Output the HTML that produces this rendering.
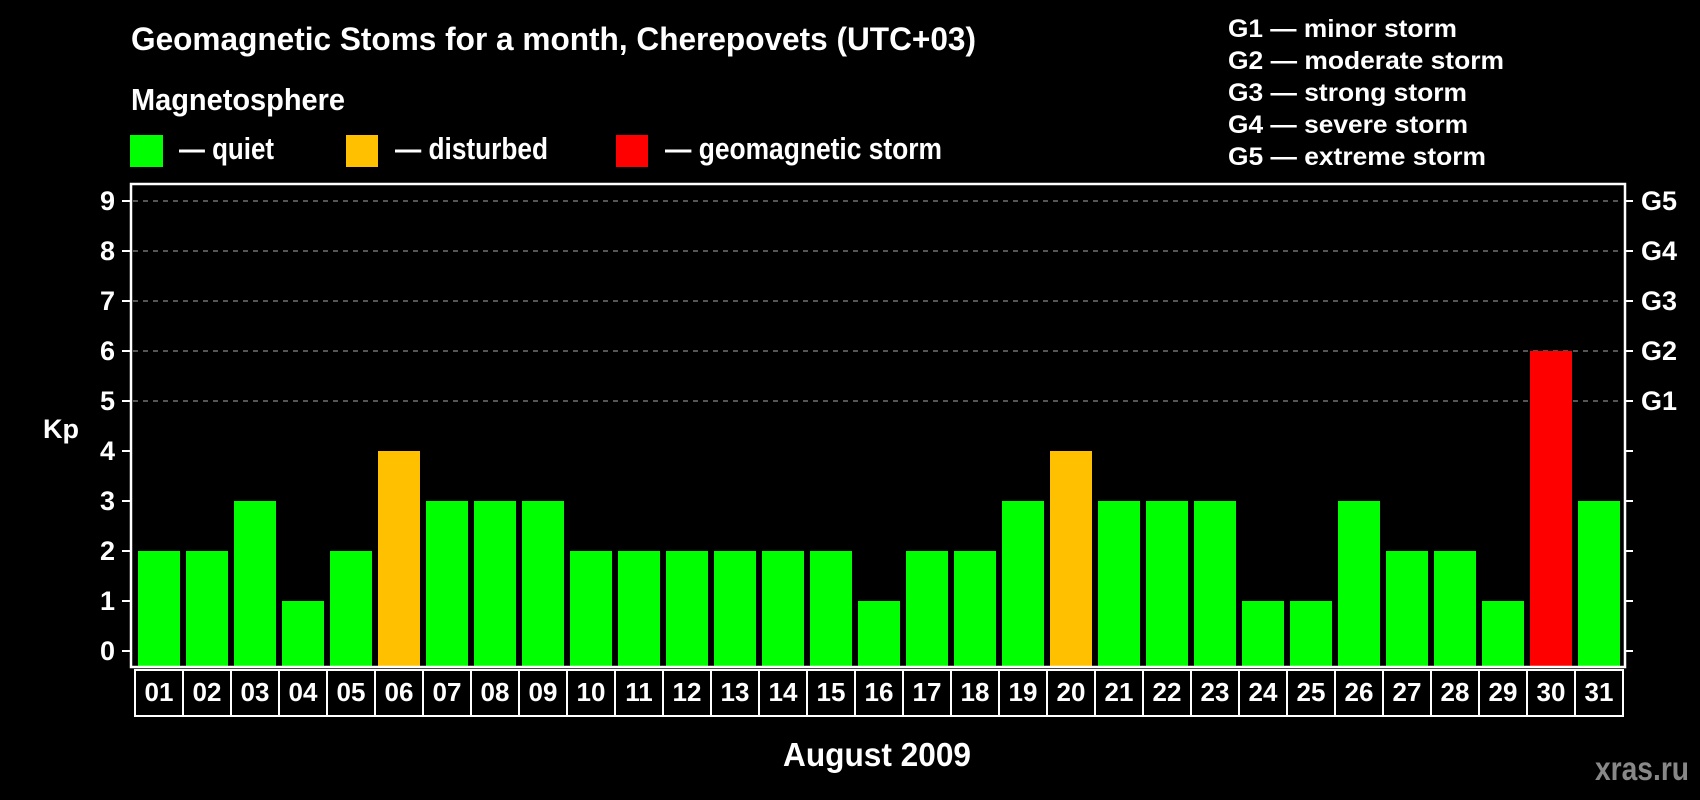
<!DOCTYPE html>
<html><head><meta charset="utf-8"><style>
html,body{margin:0;padding:0;background:#000;width:1700px;height:800px;overflow:hidden}
svg{display:block}
text{font-family:"Liberation Sans",Arial,sans-serif;font-weight:bold;fill:#fff}
</style></head><body>
<svg width="1700" height="800" viewBox="0 0 1700 800" xmlns="http://www.w3.org/2000/svg">
<rect width="1700" height="800" fill="#000"/>
<text x="131" y="50" font-size="32" textLength="845" lengthAdjust="spacingAndGlyphs">Geomagnetic Stoms for a month, Cherepovets (UTC+03)</text>
<text x="131" y="110" font-size="31" textLength="214" lengthAdjust="spacingAndGlyphs">Magnetosphere</text>
<rect x="130" y="135" width="33" height="32" fill="#00ff00"/>
<text x="179" y="159" font-size="31" textLength="95" lengthAdjust="spacingAndGlyphs">— quiet</text>
<rect x="346" y="135" width="32" height="32" fill="#ffc000"/>
<text x="395" y="159" font-size="31" textLength="153" lengthAdjust="spacingAndGlyphs">— disturbed</text>
<rect x="616" y="135" width="32" height="32" fill="#ff0000"/>
<text x="665" y="159" font-size="31" textLength="277" lengthAdjust="spacingAndGlyphs">— geomagnetic storm</text>

<text x="1228" y="37" font-size="25" textLength="229" lengthAdjust="spacingAndGlyphs">G1 — minor storm</text>
<text x="1228" y="69" font-size="25" textLength="276" lengthAdjust="spacingAndGlyphs">G2 — moderate storm</text>
<text x="1228" y="101" font-size="25" textLength="239" lengthAdjust="spacingAndGlyphs">G3 — strong storm</text>
<text x="1228" y="133" font-size="25" textLength="240" lengthAdjust="spacingAndGlyphs">G4 — severe storm</text>
<text x="1228" y="165" font-size="25" textLength="258" lengthAdjust="spacingAndGlyphs">G5 — extreme storm</text>

<g stroke="#aaa" stroke-width="1" stroke-dasharray="5,5">
<line x1="133" y1="201" x2="1623" y2="201"/>
<line x1="133" y1="251" x2="1623" y2="251"/>
<line x1="133" y1="301" x2="1623" y2="301"/>
<line x1="133" y1="351" x2="1623" y2="351"/>
<line x1="133" y1="401" x2="1623" y2="401"/>
</g>

<g>
<rect x="138" y="551" width="42" height="116" fill="#00ff00"/>
<rect x="186" y="551" width="42" height="116" fill="#00ff00"/>
<rect x="234" y="501" width="42" height="166" fill="#00ff00"/>
<rect x="282" y="601" width="42" height="66" fill="#00ff00"/>
<rect x="330" y="551" width="42" height="116" fill="#00ff00"/>
<rect x="378" y="451" width="42" height="216" fill="#ffc000"/>
<rect x="426" y="501" width="42" height="166" fill="#00ff00"/>
<rect x="474" y="501" width="42" height="166" fill="#00ff00"/>
<rect x="522" y="501" width="42" height="166" fill="#00ff00"/>
<rect x="570" y="551" width="42" height="116" fill="#00ff00"/>
<rect x="618" y="551" width="42" height="116" fill="#00ff00"/>
<rect x="666" y="551" width="42" height="116" fill="#00ff00"/>
<rect x="714" y="551" width="42" height="116" fill="#00ff00"/>
<rect x="762" y="551" width="42" height="116" fill="#00ff00"/>
<rect x="810" y="551" width="42" height="116" fill="#00ff00"/>
<rect x="858" y="601" width="42" height="66" fill="#00ff00"/>
<rect x="906" y="551" width="42" height="116" fill="#00ff00"/>
<rect x="954" y="551" width="42" height="116" fill="#00ff00"/>
<rect x="1002" y="501" width="42" height="166" fill="#00ff00"/>
<rect x="1050" y="451" width="42" height="216" fill="#ffc000"/>
<rect x="1098" y="501" width="42" height="166" fill="#00ff00"/>
<rect x="1146" y="501" width="42" height="166" fill="#00ff00"/>
<rect x="1194" y="501" width="42" height="166" fill="#00ff00"/>
<rect x="1242" y="601" width="42" height="66" fill="#00ff00"/>
<rect x="1290" y="601" width="42" height="66" fill="#00ff00"/>
<rect x="1338" y="501" width="42" height="166" fill="#00ff00"/>
<rect x="1386" y="551" width="42" height="116" fill="#00ff00"/>
<rect x="1434" y="551" width="42" height="116" fill="#00ff00"/>
<rect x="1482" y="601" width="42" height="66" fill="#00ff00"/>
<rect x="1530" y="351" width="42" height="316" fill="#ff0000"/>
<rect x="1578" y="501" width="42" height="166" fill="#00ff00"/>
</g>

<rect x="131" y="184" width="1494" height="483" fill="none" stroke="#fff" stroke-width="2.5"/>

<g stroke="#fff" stroke-width="2">
<line x1="122" y1="201" x2="131" y2="201"/><line x1="122" y1="251" x2="131" y2="251"/>
<line x1="122" y1="301" x2="131" y2="301"/><line x1="122" y1="351" x2="131" y2="351"/>
<line x1="122" y1="401" x2="131" y2="401"/><line x1="122" y1="451" x2="131" y2="451"/>
<line x1="122" y1="501" x2="131" y2="501"/><line x1="122" y1="551" x2="131" y2="551"/>
<line x1="122" y1="601" x2="131" y2="601"/><line x1="122" y1="651" x2="131" y2="651"/>
<line x1="1625" y1="201" x2="1633" y2="201"/><line x1="1625" y1="251" x2="1633" y2="251"/>
<line x1="1625" y1="301" x2="1633" y2="301"/><line x1="1625" y1="351" x2="1633" y2="351"/>
<line x1="1625" y1="401" x2="1633" y2="401"/><line x1="1625" y1="451" x2="1633" y2="451"/>
<line x1="1625" y1="501" x2="1633" y2="501"/><line x1="1625" y1="551" x2="1633" y2="551"/>
<line x1="1625" y1="601" x2="1633" y2="601"/><line x1="1625" y1="651" x2="1633" y2="651"/>
</g>

<g font-size="27" text-anchor="end">
<text x="115" y="210">9</text><text x="115" y="260">8</text><text x="115" y="310">7</text>
<text x="115" y="360">6</text><text x="115" y="410">5</text><text x="115" y="460">4</text>
<text x="115" y="510">3</text><text x="115" y="560">2</text><text x="115" y="610">1</text>
<text x="115" y="660">0</text>
</g>
<text x="43" y="438" font-size="27">Kp</text>
<g font-size="27">
<text x="1641" y="210">G5</text><text x="1641" y="260">G4</text><text x="1641" y="310">G3</text>
<text x="1641" y="360">G2</text><text x="1641" y="410">G1</text>
</g>

<g fill="none" stroke="#fff" stroke-width="2">
<rect x="135" y="670" width="1488" height="46"/>
<path d="M183 670V716M231 670V716M279 670V716M327 670V716M375 670V716M423 670V716M471 670V716M519 670V716M567 670V716M615 670V716M663 670V716M711 670V716M759 670V716M807 670V716M855 670V716M903 670V716M951 670V716M999 670V716M1047 670V716M1095 670V716M1143 670V716M1191 670V716M1239 670V716M1287 670V716M1335 670V716M1383 670V716M1431 670V716M1479 670V716M1527 670V716M1575 670V716"/>
</g>
<g font-size="26" text-anchor="middle">
<text x="159" y="701">01</text><text x="207" y="701">02</text><text x="255" y="701">03</text><text x="303" y="701">04</text>
<text x="351" y="701">05</text><text x="399" y="701">06</text><text x="447" y="701">07</text><text x="495" y="701">08</text>
<text x="543" y="701">09</text><text x="591" y="701">10</text><text x="639" y="701">11</text><text x="687" y="701">12</text>
<text x="735" y="701">13</text><text x="783" y="701">14</text><text x="831" y="701">15</text><text x="879" y="701">16</text>
<text x="927" y="701">17</text><text x="975" y="701">18</text><text x="1023" y="701">19</text><text x="1071" y="701">20</text>
<text x="1119" y="701">21</text><text x="1167" y="701">22</text><text x="1215" y="701">23</text><text x="1263" y="701">24</text>
<text x="1311" y="701">25</text><text x="1359" y="701">26</text><text x="1407" y="701">27</text><text x="1455" y="701">28</text>
<text x="1503" y="701">29</text><text x="1551" y="701">30</text><text x="1599" y="701">31</text>
</g>

<text x="783" y="766" font-size="33" textLength="188" lengthAdjust="spacingAndGlyphs">August 2009</text>
<text x="1595" y="780" font-size="33" style="fill:#888" textLength="94" lengthAdjust="spacingAndGlyphs">xras.ru</text>
</svg>
</body></html>
